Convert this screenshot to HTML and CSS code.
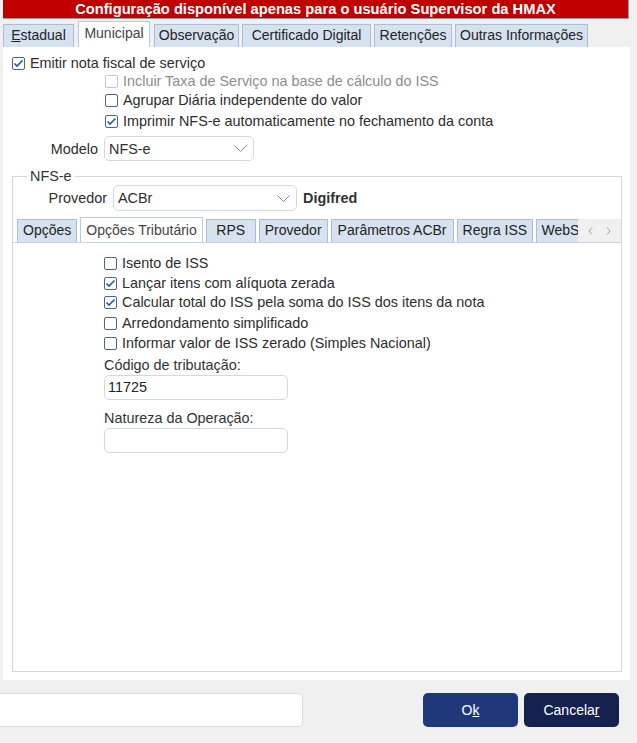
FILE: index.html
```html
<!DOCTYPE html>
<html lang="pt">
<head>
<meta charset="utf-8">
<title>Configuração</title>
<link rel="stylesheet" href="styles.css">
</head>
<body>
<div class="header">Configuração disponível apenas para o usuário Supervisor da HMAX</div>
<div class="tabs">
  <div class="tab t-est"><u>E</u>stadual</div>
  <div class="tab active t-mun">Municipal</div>
  <div class="tab t-obs">Observação</div>
  <div class="tab t-cert">Certificado Digital</div>
  <div class="tab t-ret">Retenções</div>
  <div class="tab t-out">Outras Informações</div>
</div>
<div class="panel">
  <div class="row r-emitir">
    <span class="cb checked"><svg viewBox="0 0 13 13" width="13" height="13"><polyline points="2.5,6.5 5,9 10.5,3.5" /></svg></span>
    <span>Emitir nota fiscal de serviço</span>
  </div>
  <div class="row sub r-incluir disabled">
    <span class="cb"></span>
    <span>Incluir Taxa de Serviço na base de cálculo do ISS</span>
  </div>
  <div class="row sub r-agrupar">
    <span class="cb"></span>
    <span>Agrupar Diária independente do valor</span>
  </div>
  <div class="row sub r-imprimir">
    <span class="cb checked"><svg viewBox="0 0 13 13" width="13" height="13"><polyline points="2.5,6.5 5,9 10.5,3.5" /></svg></span>
    <span>Imprimir NFS-e automaticamente no fechamento da conta</span>
  </div>
  <div class="modelo-row">
    <span class="lbl-modelo">Modelo</span>
    <div class="select sel-modelo"><span>NFS-e</span><svg class="chev" viewBox="0 0 13 7" width="13" height="7"><polyline points="0.5,0.5 6.5,6.5 12.5,0.5"/></svg></div>
  </div>
  <fieldset class="group">
    <legend>NFS-e</legend>
    <div class="prov-row">
      <span class="lbl-prov">Provedor</span>
      <div class="select sel-prov"><span>ACBr</span><svg class="chev" viewBox="0 0 13 7" width="13" height="7"><polyline points="0.5,0.5 6.5,6.5 12.5,0.5"/></svg></div>
      <span class="prov-name">Digifred</span>
    </div>
    <div class="itabs">
      <div class="itab-list">
        <div class="itab">Opções</div>
        <div class="itab active">Opções Tributário</div>
        <div class="itab i-rps">RPS</div>
        <div class="itab">Provedor</div>
        <div class="itab i-par">Parâmetros ACBr</div>
        <div class="itab i-reg">Regra ISS</div>
        <div class="itab">WebServices</div>
      </div>
      <div class="arrows">
        <svg viewBox="0 0 5 8" width="5" height="8"><polyline points="4,0.5 1,4 4,7.5"/></svg>
        <svg viewBox="0 0 5 8" width="5" height="8"><polyline points="1,0.5 4,4 1,7.5"/></svg>
      </div>
    </div>
    <div class="trib">
      <div class="row trow first">
        <span class="cb"></span><span>Isento de ISS</span>
      </div>
      <div class="row trow">
        <span class="cb checked"><svg viewBox="0 0 13 13" width="13" height="13"><polyline points="2.5,6.5 5,9 10.5,3.5" /></svg></span><span>Lançar itens com alíquota zerada</span>
      </div>
      <div class="row trow t3">
        <span class="cb checked"><svg viewBox="0 0 13 13" width="13" height="13"><polyline points="2.5,6.5 5,9 10.5,3.5" /></svg></span><span>Calcular total do ISS pela soma do ISS dos itens da nota</span>
      </div>
      <div class="row trow t4">
        <span class="cb"></span><span>Arredondamento simplificado</span>
      </div>
      <div class="row trow">
        <span class="cb"></span><span>Informar valor de ISS zerado (Simples Nacional)</span>
      </div>
      <div class="flabel l1">Código de tributação:</div>
      <div class="input">11725</div>
      <div class="flabel l2">Natureza da Operação:</div>
      <div class="input"></div>
    </div>
  </fieldset>
</div>
<div class="footer">
  <div class="finput"></div>
  <div class="buttons">
    <div class="btn ok">O<u>k</u></div>
    <div class="btn cancel">Cancela<u>r</u></div>
  </div>
</div>
</body>
</html>
```
FILE: styles.css
```css
* { box-sizing: border-box; }
html, body { margin: 0; padding: 0; }
body {
  background: #f0f0f0;
  font-family: "Liberation Sans", Arial, sans-serif;
  font-size: 14.4px;
  color: #2d2d2d;
  width: 637px;
  height: 743px;
  overflow: hidden;
}
.header {
  margin-left: 3px;
  width: 626px;
  height: 19px;
  background: #c00000;
  border-right: 1px solid #9a9a9a;
  border-bottom: 1px solid #9a9a9a;
  color: #fff;
  font-weight: bold;
  font-size: 14.7px;
  line-height: 18px;
  text-align: center;
}
.tabs {
  display: flex;
  align-items: flex-end;
  gap: 3px;
  margin-left: 3px;
  margin-top: 2px;
  height: 26px;
  font-size: 14px;
}
.tab {
  height: 23px;
  background: #d6e2ef;
  border: 1px solid #a9bfd9;
  border-bottom: none;
  line-height: 21px;
  color: #222;
  white-space: nowrap;
  text-align: center;
  flex: none;
}
.t-est { width: 71px; }
.t-mun { width: 72px; margin-left: 1px; }
.t-obs { width: 85px; margin-left: 1px; }
.t-cert { width: 129px; }
.t-ret { width: 78px; }
.t-out { width: 133px; }
.tab u { text-decoration: underline; }
.tab.active {
  height: 26px;
  background: #fff;
  color: #444;
  line-height: 23px;
  border-color: #b9cbe0;
}
.panel {
  margin-left: 3px;
  width: 627px;
  height: 633px;
  background: #fff;
  padding-top: 7px;
}
.row {
  display: flex;
  align-items: center;
  height: 18px;
  gap: 5px;
  white-space: nowrap;
}
.r-emitir { margin-left: 9px; }
.sub { margin-left: 102px; }
.r-agrupar { margin-top: 1px; }
.r-imprimir { margin-top: 3px; }
.cb {
  width: 13px;
  height: 13px;
  flex: none;
  border: 1px solid #4f6384;
  border-radius: 2px;
  background: #fff;
  position: relative;
}
.cb svg {
  position: absolute;
  left: -1px;
  top: -1px;
}
.cb polyline {
  fill: none;
  stroke: #2557a7;
  stroke-width: 1.6;
}
.disabled { color: #8d8d8d; }
.disabled .cb { border-color: #c6c6c6; }
.modelo-row {
  display: flex;
  align-items: center;
  margin-top: 6px;
  height: 25px;
}
.lbl-modelo {
  width: 101px;
  text-align: right;
  padding-right: 6px;
}
.select {
  display: flex;
  align-items: center;
  justify-content: space-between;
  border: 1px solid #d3d9e2;
  border-radius: 5px;
  background: #fff;
  padding: 0 6px 0 4px;
}
.sel-modelo { width: 150px; height: 25px; }
.chev polyline { fill: none; stroke: #8a8a8a; stroke-width: 1; }
.group {
  margin: 7px 0 0 9px;
  width: 610px;
  height: 504px;
  padding: 0;
  border: 1px solid #d6d6d6;
  min-width: 0;
}
.group legend {
  margin-left: 14px;
  padding: 0 3px;
  line-height: 16px;
  color: #333;
}
.prov-row {
  display: flex;
  align-items: center;
  height: 26px;
  margin-top: 1px;
}
.lbl-prov {
  width: 100px;
  text-align: right;
  padding-right: 6px;
}
.sel-prov { width: 184px; height: 26px; }
.prov-name {
  margin-left: 6px;
  font-weight: bold;
  color: #333;
}
.itabs {
  display: flex;
  margin-top: 6px;
  height: 26px;
  border-bottom: 1px solid #c5d3e3;
  font-size: 14px;
}
.itab-list {
  display: flex;
  align-items: flex-end;
  gap: 3px;
  padding-left: 4px;
  width: 565px;
  overflow: hidden;
  flex: none;
}
.itab {
  flex: none;
  height: 23px;
  padding: 0 5px;
  background: #d6e2ef;
  border: 1px solid #a9bfd9;
  border-bottom: none;
  line-height: 21px;
  white-space: nowrap;
  color: #222;
  text-align: center;
}
.itab.i-rps { width: 50px; }
.itab.i-par { width: 123px; }
.itab.i-reg { width: 76px; }
.itab.active {
  height: 26px;
  background: #fff;
  color: #444;
  line-height: 24px;
  border-color: #b9cbe0;
  margin-bottom: -1px;
  padding: 0 5px;
}
.arrows {
  flex: 1;
  display: flex;
  align-items: center;
  justify-content: space-around;
  background: #f0f0f0;
  height: 23px;
  align-self: flex-end;
  padding: 0 4px 0 4px;
}
.arrows polyline { fill: none; stroke: #a0a0a0; stroke-width: 1; }
.trib {
  padding-left: 91px;
  padding-top: 11px;
}
.trow { height: 18px; margin-top: 2px; }
.trow.first { margin-top: 0; }
.trow.t3 { margin-top: 1px; }
.trow.t4 { margin-top: 3px; }
.flabel {
  height: 18px;
  line-height: 18px;
  color: #333;
}
.l1 { margin-top: 4px; }
.l2 { margin-top: 9px; }
.input {
  margin-top: 1px;
  width: 184px;
  height: 25px;
  border: 1px solid #d3d9e2;
  border-radius: 5px;
  padding: 0 6px 0 3px;
  line-height: 23px;
  color: #222;
}
.footer {
  display: flex;
  align-items: center;
  justify-content: space-between;
  margin-top: 13px;
  height: 34px;
}
.finput {
  margin-left: -5px;
  width: 308px;
  height: 34px;
  background: #fff;
  border: 1px solid #d6dde8;
  border-radius: 5px;
}
.buttons {
  display: flex;
  gap: 6px;
  margin-right: 18px;
}
.btn {
  width: 95px;
  height: 34px;
  border-radius: 5px;
  color: #fff;
  text-align: center;
  line-height: 34px;
  font-size: 14px;
}
.ok { background: #1f387c; }
.cancel { background: #15224f; }
```
